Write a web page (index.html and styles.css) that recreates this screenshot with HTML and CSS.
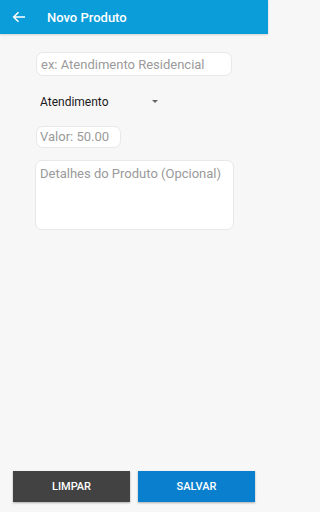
FILE: index.html
```html
<!DOCTYPE html>
<html lang="pt">
<head>
<meta charset="utf-8">
<link rel="stylesheet" href="styles.css">
</head>
<body>
<div class="app">
  <header class="bar">
    <svg class="back" width="14" height="12" viewBox="0 0 14 12"><path d="M13 6H2M6.5 1.2L1.7 6l4.8 4.8" fill="none" stroke="#fff" stroke-width="1.6"/></svg>
    <span class="title">Novo Produto</span>
  </header>
  <main class="form">
    <div class="field name">ex: Atendimento Residencial</div>
    <div class="select"><span>Atendimento</span><span class="caret"></span></div>
    <div class="field valor">Valor: 50.00</div>
    <div class="field area">Detalhes do Produto (Opcional)</div>
  </main>
  <footer class="actions">
    <button class="btn dark">LIMPAR</button>
    <button class="btn blue">SALVAR</button>
  </footer>
</div>
</body>
</html>
```
FILE: styles.css
```css
html, body { margin: 0; padding: 0; }
body { background: #f8f7f8; font-family: Roboto, "Noto Sans", sans-serif; }
.app { width: 268px; height: 512px; display: flex; flex-direction: column; }
.bar { height: 34px; background: #0a9dd9; display: flex; align-items: center; box-shadow: 0 1px 2px rgba(0,0,0,0.15); }
.back { margin-left: 12px; }
.title { margin-left: 21px; color: #fff; font-size: 13px; font-weight: 500; }
.form { flex: 1; padding-top: 18px; padding-left: 35px; display: flex; flex-direction: column; align-items: flex-start; }
.field { box-sizing: border-box; background: #fff; border: 1px solid #e8e8e8; border-radius: 7px; color: #9a9a9a; font-size: 13px; }
.name { margin-left: 1px; width: 196px; height: 24px; padding: 3px 0 0 4px; line-height: 17px; }
.select { margin: 14px 0 0 5px; width: 118px; display: flex; align-items: center; justify-content: space-between; font-size: 12px; color: #1a1a1a; height: 24px; }
.caret { width: 0; height: 0; border-left: 3.5px solid transparent; border-right: 3.5px solid transparent; border-top: 3.5px solid #666; margin-top: -2px; }
.valor { margin: 12px 0 0 1px; width: 85px; height: 22px; padding: 1px 0 0 3px; line-height: 18px; }
.area { margin-top: 12px; width: 199px; height: 70px; padding: 4px 0 0 4px; line-height: 17px; }
.actions { display: flex; gap: 8px; padding: 0 13px 10px 13px; }
.btn { width: 117px; height: 31px; border: none; border-radius: 0; color: #fff; font-family: Roboto, sans-serif; font-size: 11px; font-weight: 500; box-shadow: 0 1px 2px rgba(0,0,0,0.3); }
.dark { background: #424242; }
.blue { background: #0a7fcd; }
```
